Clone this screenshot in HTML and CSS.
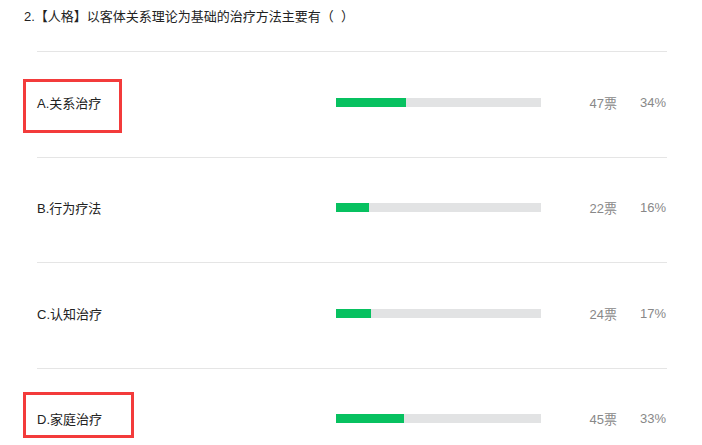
FILE: index.html
```html
<!DOCTYPE html>
<html lang="zh">
<head>
    <meta charset="UTF-8">
    <title>投票结果</title>
    <link rel="stylesheet" href="styles.css">
</head>
<body>
<div class="page">
    <p class="question">2.【人格】以客体关系理论为基础的治疗方法主要有（&nbsp;&nbsp;）</p>

    <div class="poll">
        <div class="row">
            <span class="label">A.关系治疗</span>
            <div class="bar"><div class="fill" style="width: 34%"></div></div>
            <span class="count">47票</span>
            <span class="pct">34%</span>
        </div>
        <div class="row">
            <span class="label">B.行为疗法</span>
            <div class="bar"><div class="fill" style="width: 16%"></div></div>
            <span class="count">22票</span>
            <span class="pct">16%</span>
        </div>
        <div class="row">
            <span class="label">C.认知治疗</span>
            <div class="bar"><div class="fill" style="width: 17%"></div></div>
            <span class="count">24票</span>
            <span class="pct">17%</span>
        </div>
        <div class="row">
            <span class="label">D.家庭治疗</span>
            <div class="bar"><div class="fill" style="width: 33%"></div></div>
            <span class="count">45票</span>
            <span class="pct">33%</span>
        </div>
    </div>

    <!-- hand drawn marks around the answers -->
    <div class="mark mark-a"></div>
    <div class="mark mark-d"></div>
</div>
</body>
</html>
```

FILE: styles.css
```css
body {
    margin: 0;
    background-color: #fff;
    color: #222;
    font-family: "Liberation Sans", "Noto Sans CJK SC", sans-serif;
    font-size: 13px;
}

.page {
    position: relative;
    height: 445px;
    overflow: hidden;
}

.question {
    margin: 0;
    padding: 8px 0 0 24px;
    line-height: 18px;
}

.poll {
    margin: 25px 35px 0 37px;
}

.row {
    display: flex;
    align-items: center;
    height: 105.5px;
    padding-bottom: 4px;
    box-sizing: border-box;
    border-top: 1px solid #e5e5e5;
}

.label {
    width: 299px;
    color: #222;
}

.bar {
    width: 205px;
    height: 9px;
    background-color: #e2e3e4;
}

.fill {
    height: 100%;
    background-color: #07c160;
}

.count {
    width: 76px;
    text-align: right;
    color: #888;
}

.pct {
    width: 49px;
    text-align: right;
    color: #888;
}

.mark {
    position: absolute;
    border: 3px solid #f33b3b;
    box-sizing: border-box;
}

.mark-a {
    left: 23px;
    top: 79px;
    width: 99px;
    height: 54px;
}

.mark-d {
    left: 23px;
    top: 392px;
    width: 111px;
    height: 46px;
}
```
